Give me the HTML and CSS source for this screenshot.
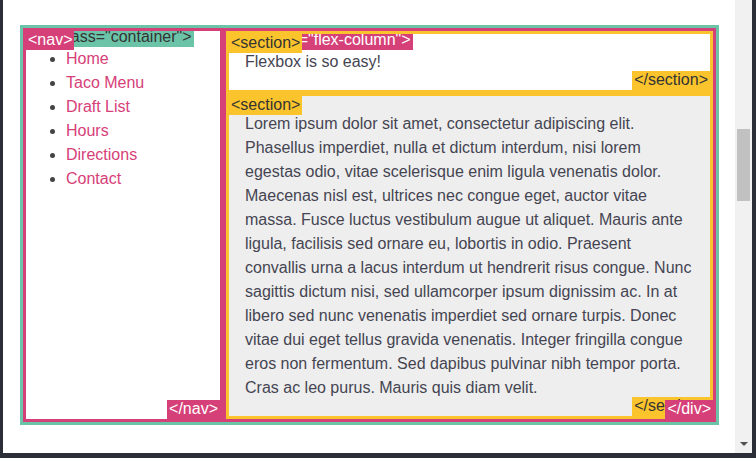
FILE: index.html
```html
<!DOCTYPE html>
<html>
<head>
<meta charset="utf-8">
<link rel="stylesheet" href="styles.css">
</head>
<body>
<div class="window">
  <div class="viewport">
    <div class="container">
      <nav class="nav">
        <ul>
          <li><a href="#">Home</a></li>
          <li><a href="#">Taco Menu</a></li>
          <li><a href="#">Draft List</a></li>
          <li><a href="#">Hours</a></li>
          <li><a href="#">Directions</a></li>
          <li><a href="#">Contact</a></li>
        </ul>
      </nav>
      <div class="flex-column">
        <section class="sec sec-intro">Flexbox is so easy!</section>
        <section class="sec sec-body">Lorem ipsum dolor sit amet, consectetur adipiscing elit. Phasellus imperdiet, nulla et dictum interdum, nisi lorem egestas odio, vitae scelerisque enim ligula venenatis dolor. Maecenas nisl est, ultrices nec congue eget, auctor vitae massa. Fusce luctus vestibulum augue ut aliquet. Mauris ante ligula, facilisis sed ornare eu, lobortis in odio. Praesent convallis urna a lacus interdum ut hendrerit risus congue. Nunc sagittis dictum nisi, sed ullamcorper ipsum dignissim ac. In at libero sed nunc venenatis imperdiet sed ornare turpis. Donec vitae dui eget tellus gravida venenatis. Integer fringilla congue eros non fermentum. Sed dapibus pulvinar nibh tempor porta. Cras ac leo purus. Mauris quis diam velit.</section>
      </div>
    </div>
  </div>
  <div class="scrollbar">
    <div class="thumb"></div>
    <div class="arrow-down"></div>
  </div>
</div>
<div class="frame-bottom"></div>
</body>
</html>
```

FILE: styles.css
```css
html, body {
  margin: 0;
  padding: 0;
  height: 458px;
  overflow: hidden;
  background: #2b2e37;
  font-family: "Liberation Sans", Arial, sans-serif;
  font-size: 16px;
  color: #454552;
}

.window {
  display: flex;
  height: 453px;
  padding-left: 3px;
  padding-right: 4px;
  background: #2b2e37;
}

.viewport {
  flex: 1;
  background: #fff;
  overflow: hidden;
}

.scrollbar {
  width: 17px;
  background: #f1f1f1;
  display: flex;
  flex-direction: column;
}

.thumb {
  margin: 129px 0 0 2px;
  width: 13px;
  height: 72px;
  background: #c1c1c1;
}

.arrow-down {
  margin: auto 0 7px 5px;
  width: 0;
  height: 0;
  border-left: 4px solid transparent;
  border-right: 4px solid transparent;
  border-top: 4px solid #505050;
}

.frame-bottom {
  height: 5px;
  background: #2b2e37;
}

.container {
  margin: 25px 0 0 17px;
  width: 699px;
  box-sizing: border-box;
  border: 3px solid #6bc4a8;
  display: flex;
  position: relative;
  background: #fff;
}

.container::before {
  content: '<div class="container">';
  position: absolute;
  top: 0;
  left: 0;
  padding: 0 2px 1px;
  line-height: 18px;
  background: #6bc4a8;
  color: #333;
}

.nav {
  width: 200px;
  box-sizing: border-box;
  border: 3px solid #d64078;
  position: relative;
}

.nav::before,
.nav::after {
  position: absolute;
  padding: 0 2px 1px;
  line-height: 18px;
  background: #d64078;
  color: #fff;
}

.nav::before {
  content: '<nav>';
  top: 0;
  left: 0;
}

.nav::after {
  content: '</nav>';
  bottom: 0;
  right: 0;
}

.nav ul {
  margin: 16px 0;
  padding-left: 40px;
  line-height: 24px;
}

.nav li {
  color: #444;
}

.nav a {
  color: #d64078;
  text-decoration: none;
}

.flex-column {
  flex: 1;
  border: 3px solid #d64078;
  position: relative;
  display: flex;
  flex-direction: column;
  background: #fff;
}

.flex-column::before,
.flex-column::after {
  position: absolute;
  padding: 0 2px 1px;
  line-height: 18px;
  background: #d64078;
  color: #fff;
}

.flex-column::before {
  content: '<div class="flex-column">';
  top: 0;
  left: 0;
}

.flex-column::after {
  content: '</div>';
  bottom: 0;
  right: 0;
}

.sec {
  position: relative;
  border: 3px solid #fcc42c;
  padding: 16px;
  line-height: 24px;
}

.sec::before,
.sec::after {
  position: absolute;
  padding: 0 2px 1px;
  line-height: 18px;
  background: #fcc42c;
  color: #333;
}

.sec::before {
  content: '<section>';
  top: 0;
  left: 0;
}

.sec::after {
  content: '</section>';
  bottom: 0;
  right: 0;
}

.sec-body {
  background: #eeeeee;
}
```
